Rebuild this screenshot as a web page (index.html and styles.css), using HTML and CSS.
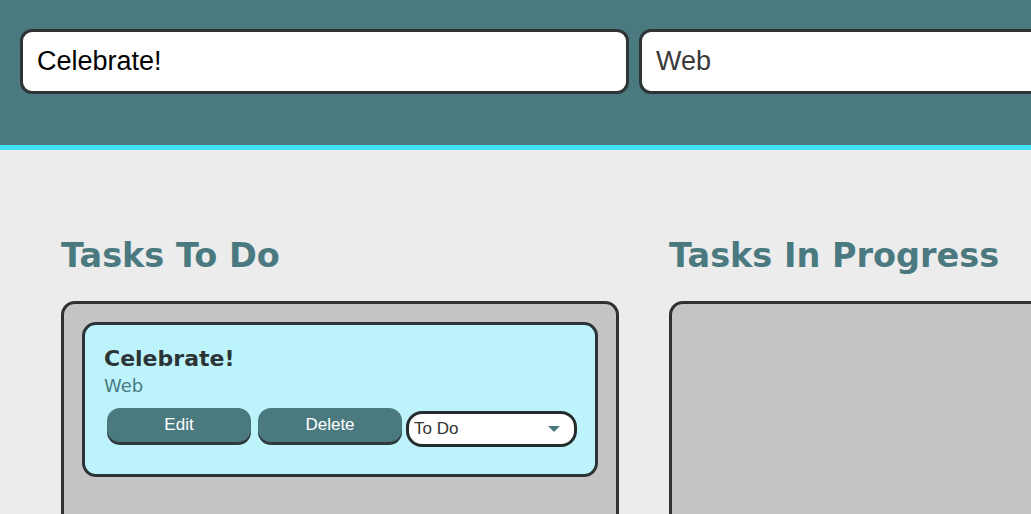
FILE: index.html
```html
<!DOCTYPE html>
<html lang="en">
<head>
<meta charset="utf-8">
<title>Task Board</title>
<link rel="stylesheet" href="styles.css">
</head>
<body>
<header class="top">
  <form class="task-form">
    <input class="field field-name" type="text" value="Celebrate!">
    <div class="field field-type">Web</div>
  </form>
</header>
<main class="board">
  <section class="column">
    <h2 class="column-title">Tasks To Do</h2>
    <div class="column-box">
      <div class="card">
        <h3 class="card-title">Celebrate!</h3>
        <p class="card-type">Web</p>
        <div class="card-actions">
          <button class="btn btn-edit" type="button">Edit</button>
          <button class="btn btn-delete" type="button">Delete</button>
          <div class="status">
            <span class="status-text">To Do</span>
            <svg class="status-arrow" width="12" height="7" viewBox="0 0 12 7"><path d="M0 0 L12 0 L6 6 Z" fill="#4a7a80"/></svg>
          </div>
        </div>
      </div>
    </div>
  </section>
  <section class="column">
    <h2 class="column-title">Tasks In Progress</h2>
    <div class="column-box"></div>
  </section>
</main>
</body>
</html>
```
FILE: styles.css
```css
* { box-sizing: border-box; }
html, body { margin: 0; padding: 0; }
body {
  background: #ececec;
  font-family: "Liberation Sans", Arial, sans-serif;
  width: 1031px;
  height: 514px;
  overflow: hidden;
}
.top {
  background: #4a7a80;
  height: 150px;
  border-bottom: 5px solid #44e0f7;
  padding: 29px 0 0 20px;
}
.task-form {
  display: flex;
  gap: 10px;
}
.field {
  flex: 0 0 609px;
  width: 609px;
  height: 65px;
  border: 3px solid #2e3436;
  border-radius: 12px;
  background: #fff;
  padding: 0 14px;
  font-family: "Liberation Sans", Arial, sans-serif;
  font-size: 27px;
  line-height: 59px;
  color: #000;
  outline: none;
}
.field-type { color: #3a3a3a; }
.board {
  display: flex;
  gap: 50px;
  padding: 86px 0 0 61px;
}
.column {
  flex: 0 0 558px;
  width: 558px;
}
.column-title {
  margin: 0 0 25px 0;
  font-family: "DejaVu Sans", Verdana, sans-serif;
  font-weight: bold;
  font-size: 33.5px;
  line-height: 40px;
  color: #4a7a80;
  white-space: nowrap;
}
.column-box {
  background: #c4c4c4;
  border: 3px solid #303030;
  border-radius: 14px;
  height: 260px;
  padding: 18px;
}
.card {
  background: #bdf4fc;
  border: 3px solid #2d3436;
  border-radius: 14px;
  padding: 21px 18px 27px 19px;
}
.card-title {
  margin: 0;
  font-family: "DejaVu Sans", Verdana, sans-serif;
  font-weight: bold;
  font-size: 22px;
  line-height: 26px;
  color: #2d3436;
}
.card-type {
  margin: 3px 0 0;
  font-family: "DejaVu Sans", Verdana, sans-serif;
  font-size: 18px;
  line-height: 22px;
  color: #4a7a80;
}
.card-actions {
  display: flex;
  align-items: flex-start;
  margin-top: 11px;
  height: 39px;
}
.btn {
  height: 34px;
  width: 144px;
  border: none;
  border-radius: 13px;
  background: #4a7a80;
  color: #fff;
  font-family: "Liberation Sans", Arial, sans-serif;
  font-size: 17px;
  line-height: 34px;
  padding: 0;
  box-shadow: 0 3px 0 #2f3a3b;
}
.btn-edit { margin-left: 3px; }
.btn-delete { margin-left: 7px; }
.status {
  margin: 3px 0 0 4px;
  width: 171px;
  height: 36px;
  border: 3px solid #252c2d;
  border-radius: 16px;
  background: #fff;
  display: flex;
  align-items: center;
  justify-content: space-between;
  padding: 0 14px 0 5px;
}
.status-text {
  font-family: "Liberation Sans", Arial, sans-serif;
  font-size: 17px;
  color: #333;
}
.status-arrow { display: block; }
```
